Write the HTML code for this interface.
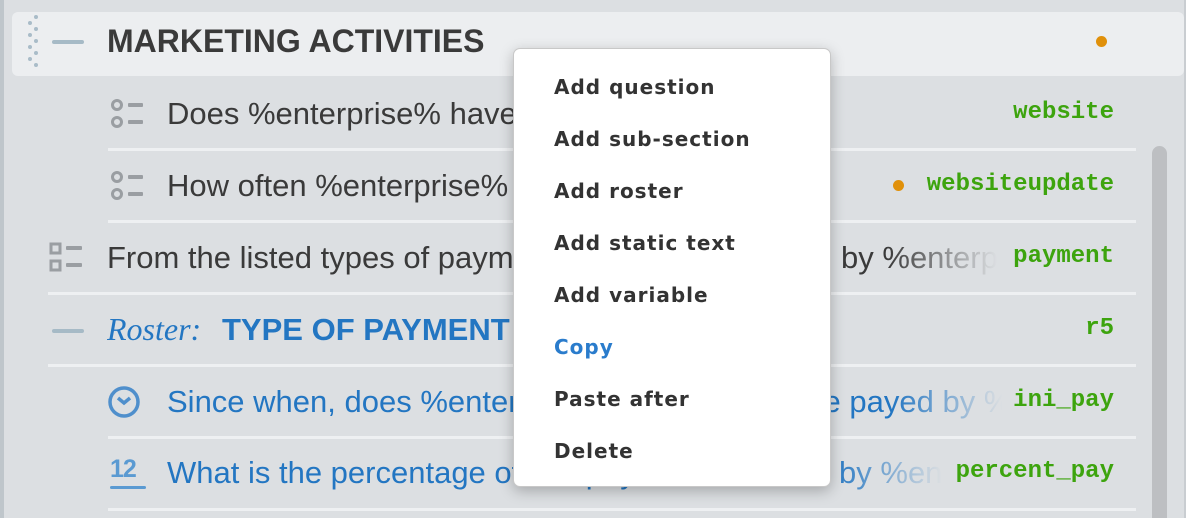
<!DOCTYPE html>
<html><head><meta charset="utf-8"><style>
*{margin:0;padding:0;box-sizing:border-box}
body{width:1186px;height:518px;overflow:hidden;background:#dcdfe2;font-family:"Liberation Sans",Arial,sans-serif;position:relative}
.abs{position:absolute}
.leftbar{left:0;top:0;width:4px;height:518px;background:#bfc6cb}
.rightbar{left:1184px;top:0;width:2px;height:518px;background:#c9cdd1}
.hdr{left:12px;top:12px;width:1172px;height:64px;background:#eceef0;border-radius:6px}
.sep{height:3px;background:#eef0f2}
.txt{font-size:31px;white-space:nowrap;color:#3a3a3a;overflow:hidden}
.clip{-webkit-mask-image:linear-gradient(to right,#000 calc(100% - 110px),transparent);mask-image:linear-gradient(to right,#000 calc(100% - 110px),transparent)}
.blue{color:#2376c2}
.code{font-family:"Liberation Mono","DejaVu Sans Mono",monospace;font-weight:bold;font-size:24px;color:#3da40e;right:72px;text-align:right;white-space:nowrap}
.dot{width:11px;height:11px;border-radius:50%;background:#e0900a}
.menu{left:513px;top:48px;width:318px;height:439px;background:#fff;border-radius:7px;border:1px solid #c8c8c8;box-shadow:0 4px 14px rgba(0,0,0,.25)}
.mi{position:absolute;left:40px;font-family:"DejaVu Sans",Verdana,sans-serif;font-weight:bold;font-size:20px;letter-spacing:1px;color:#333;white-space:nowrap}
.scroll{left:1152px;top:146px;width:15px;height:372px;background:#bdbfc2;border-radius:8px 8px 0 0}
</style></head><body>
<div class="abs leftbar"></div>
<div class="abs rightbar"></div>
<div class="abs hdr"></div>
<svg class="abs" style="left:24px;top:13px" width="20" height="56">
<g fill="#a9bcc8"><circle cx="12" cy="4" r="2"/><circle cx="6" cy="10" r="2"/><circle cx="12" cy="16" r="2"/><circle cx="6" cy="22" r="2"/><circle cx="12" cy="28" r="2"/><circle cx="6" cy="34" r="2"/><circle cx="12" cy="40" r="2"/><circle cx="6" cy="46" r="2"/><circle cx="12" cy="52" r="2"/></g></svg>
<div class="abs" style="left:52px;top:40px;width:32px;height:4px;background:#a6bac6;border-radius:2px"></div>
<div class="abs txt" style="left:107px;top:23px;font-weight:bold;font-size:32px;color:#3a3a3a">MARKETING ACTIVITIES</div>
<div class="abs dot" style="left:1096px;top:36px"></div>

<svg class="abs" style="left:108px;top:97px" width="40" height="34"><g fill="none" stroke="#9a9ea2" stroke-width="3"><circle cx="9" cy="8" r="4.5"/><circle cx="9" cy="25" r="4.5"/></g><g fill="#9a9ea2"><rect x="20" y="6" width="15" height="4" rx="1"/><rect x="20" y="23" width="15" height="4" rx="1"/></g></svg>
<div class="abs txt" style="left:167px;top:96px">Does %enterprise% have a website?</div>
<div class="abs code" style="top:99px">website</div>
<div class="abs sep" style="left:108px;top:148px;width:1028px"></div>

<svg class="abs" style="left:108px;top:169px" width="40" height="34"><g fill="none" stroke="#9a9ea2" stroke-width="3"><circle cx="9" cy="8" r="4.5"/><circle cx="9" cy="25" r="4.5"/></g><g fill="#9a9ea2"><rect x="20" y="6" width="15" height="4" rx="1"/><rect x="20" y="23" width="15" height="4" rx="1"/></g></svg>
<div class="abs txt" style="left:167px;top:168px">How often %enterprise% updates</div>
<div class="abs dot" style="left:893px;top:180px"></div>
<div class="abs code" style="top:171px">websiteupdate</div>
<div class="abs sep" style="left:108px;top:220px;width:1028px"></div>

<svg class="abs" style="left:48px;top:241px" width="40" height="34"><g fill="none" stroke="#9a9ea2" stroke-width="3"><rect x="3" y="3" width="9" height="9"/><rect x="3" y="20" width="9" height="9"/></g><g fill="#9a9ea2"><rect x="18" y="5" width="16" height="4" rx="1"/><rect x="18" y="22" width="16" height="4" rx="1"/></g></svg>
<div class="abs txt clip" style="left:107px;top:240px;width:890px">From the listed types of payment which are accepted by %enterprise%</div>
<div class="abs code" style="top:243px">payment</div>
<div class="abs sep" style="left:48px;top:292px;width:1088px"></div>

<div class="abs" style="left:52px;top:329px;width:32px;height:4px;background:#a6bac6;border-radius:2px"></div>
<div class="abs txt blue" style="left:107px;top:311px;font-family:'Liberation Serif',serif;font-style:italic;font-size:32px">Roster:</div>
<div class="abs txt blue" style="left:222px;top:312px;font-weight:bold">TYPE OF PAYMENT</div>
<div class="abs code" style="top:315px">r5</div>
<div class="abs sep" style="left:48px;top:364px;width:1088px"></div>

<svg class="abs" style="left:107px;top:385px" width="36" height="36"><circle cx="17" cy="17" r="14" fill="none" stroke="#4f8fcc" stroke-width="3.5"/><path d="M11 13l6 5 6-5" fill="none" stroke="#4f8fcc" stroke-width="3.5"/></svg>
<div class="abs txt blue clip" style="left:167px;top:384px;width:835px">Since when, does %enterprise% accept that type payed by %enterprise%</div>
<div class="abs code" style="top:387px">ini_pay</div>
<div class="abs sep" style="left:108px;top:436px;width:1028px"></div>

<div class="abs" style="left:110px;top:455px;font-size:25px;font-weight:bold;color:#5a9ad2;letter-spacing:-1px">12</div>
<div class="abs" style="left:110px;top:486px;width:36px;height:3px;background:#5a9ad2;border-radius:2px"></div>
<div class="abs txt blue clip" style="left:167px;top:455px;width:775px">What is the percentage of this payment received by %enterprise%</div>
<div class="abs code" style="top:458px">percent_pay</div>
<div class="abs sep" style="left:108px;top:508px;width:1028px"></div>

<div class="abs scroll"></div>

<div class="abs menu">
<div class="mi" style="top:26px">Add question</div>
<div class="mi" style="top:78px">Add sub-section</div>
<div class="mi" style="top:130px">Add roster</div>
<div class="mi" style="top:182px">Add static text</div>
<div class="mi" style="top:234px">Add variable</div>
<div class="mi" style="top:286px;color:#2a7ccc">Copy</div>
<div class="mi" style="top:338px">Paste after</div>
<div class="mi" style="top:390px">Delete</div>
</div>
</body></html>
